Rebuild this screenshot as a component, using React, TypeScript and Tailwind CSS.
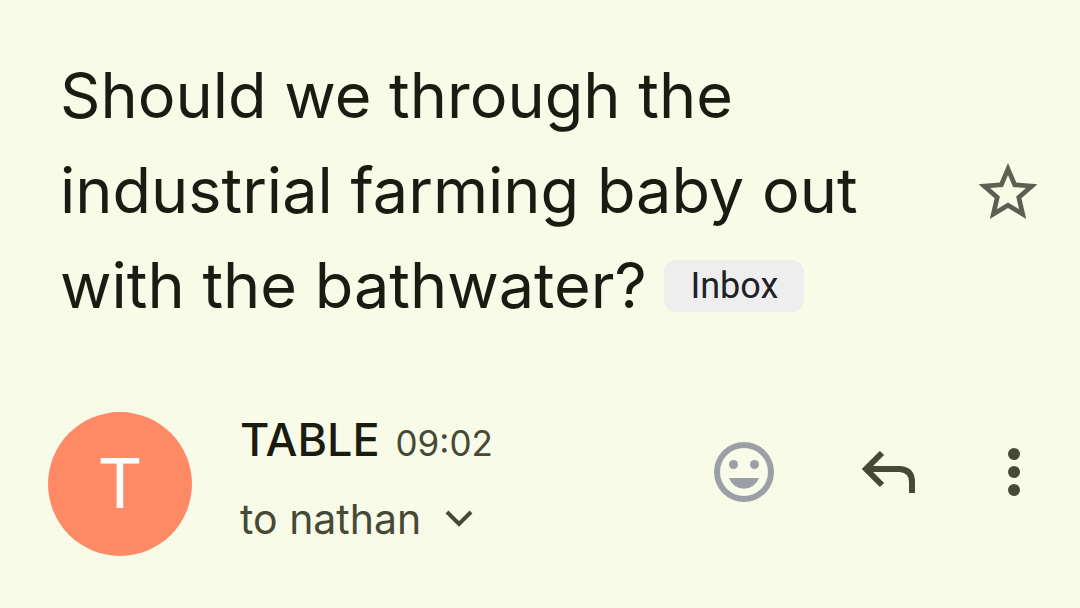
import type { ReactNode } from 'react';

const subject = 'Should we through the industrial farming baby out with the bathwater?';

function IconButton({ label, children }: { label: string; children: ReactNode }) {
  return (
    <button type="button" aria-label={label} className="shrink-0">
      {children}
    </button>
  );
}

function Subject() {
  return (
    <header className="flex items-center justify-between pr-[42px] pl-15">
      <h1 className="max-w-[830px] text-[63px] leading-[95px] text-[#1a1c12]">
        {subject}{' '}
        <span className="inline-flex h-[52px] items-center rounded-xl bg-[#eeeeee] px-[26px] align-[10px] font-['Roboto',sans-serif] text-[36px] leading-none text-[#202124]">
          Inbox
        </span>
      </h1>
      <IconButton label="Star">
        <svg viewBox="2 2 20 19" className="h-14 w-15 fill-[#5c6052]">
          <path d="M22 9.24l-7.19-.62L12 2 9.19 8.63 2 9.24l5.46 4.73L5.82 21 12 17.27 18.18 21l-1.63-7.03L22 9.24zM12 15.4l-3.76 2.27 1-4.28-3.32-2.88 4.38-.38L12 6.1l1.71 4.04 4.38.38-3.32 2.88 1 4.28L12 15.4z" />
        </svg>
      </IconButton>
    </header>
  );
}

function Actions() {
  return (
    <div className="mt-[30px] ml-auto flex items-center gap-[88px]">
      <IconButton label="Add reaction">
        <svg viewBox="2 2 20 20" className="size-15 fill-[#9aa0a6]">
          <path d="M12 2a10 10 0 1 0 0 20 10 10 0 0 0 0-20zm0 18a8 8 0 1 1 0-16 8 8 0 0 1 0 16zM7 14h10a5.3 5.3 0 0 1-10 0z" />
          <circle cx="8.5" cy="9.5" r="1.5" />
          <circle cx="15.5" cy="9.5" r="1.5" />
        </svg>
      </IconButton>
      <IconButton label="Reply">
        <svg viewBox="0 0 58 42" className="h-[42px] w-[58px] fill-none stroke-[#454936] stroke-6">
          <path d="M20 2L4 18l16 16M4 18h34q12 1 12 13v11" />
        </svg>
      </IconButton>
      <IconButton label="More options">
        <svg viewBox="0 0 12 48" className="h-12 w-3 fill-[#454936]">
          <circle cx="6" cy="6" r="6" />
          <circle cx="6" cy="24" r="6" />
          <circle cx="6" cy="42" r="6" />
        </svg>
      </IconButton>
    </div>
  );
}

function Sender() {
  return (
    <section className="flex items-start pr-15 pl-12">
      <div className="flex size-36 shrink-0 items-center justify-center rounded-full bg-[#ff8a65] font-['Roboto',sans-serif] text-[70px] text-white">
        T
      </div>
      <div className="ml-12 flex flex-col gap-5">
        <p className="flex items-baseline gap-4">
          <span className="text-[45px] leading-[56px] font-medium text-[#1a1c12]">TABLE</span>
          <time className="text-[35px] leading-[56px] text-[#454936]">09:02</time>
        </p>
        <button type="button" className="flex items-center gap-6 text-[41px] leading-[56px] text-[#454936]">
          to nathan
          <svg viewBox="0 0 28 18" className="h-[18px] w-[28px] fill-none stroke-[#454936] stroke-4">
            <path d="M2 2l12 12L26 2" />
          </svg>
        </button>
      </div>
      <Actions />
    </section>
  );
}

export default function App() {
  return (
    <main className="flex min-h-screen flex-col gap-[79px] bg-[#f8fbe8] pt-12 font-['Inter',sans-serif]">
      <Subject />
      <Sender />
    </main>
  );
}
